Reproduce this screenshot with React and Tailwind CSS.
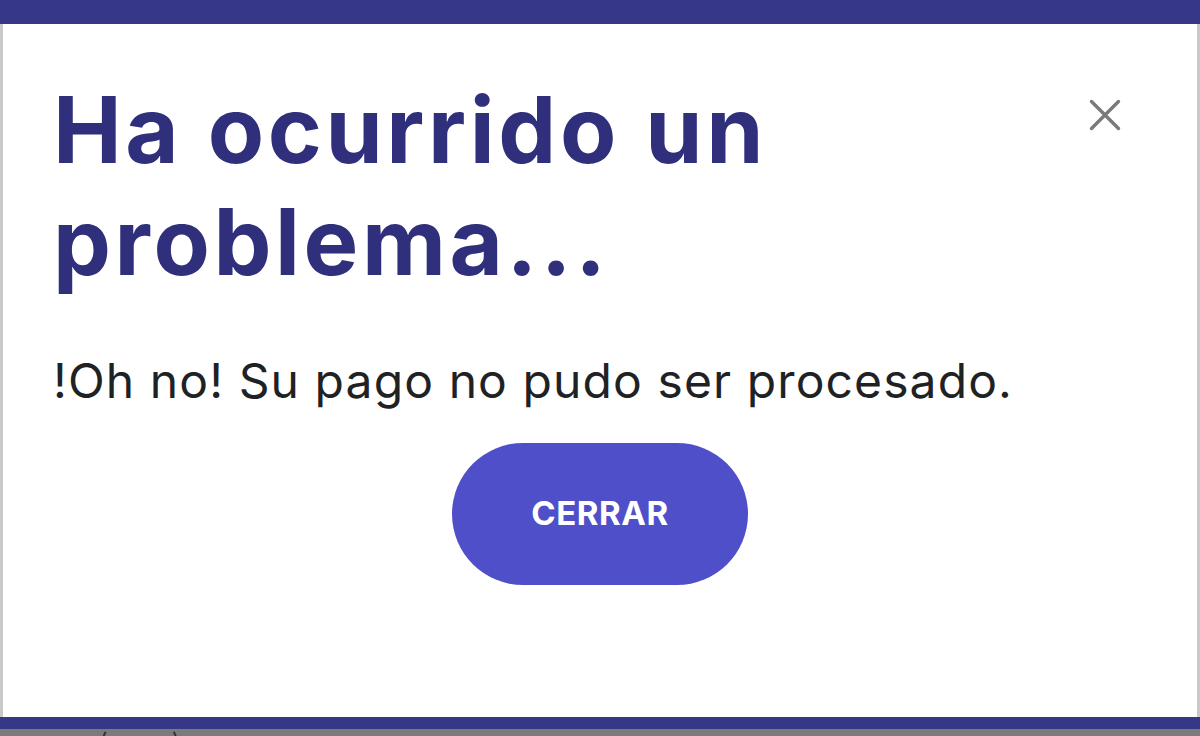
export default function App() {
  return (
    <div className="w-[1200px] h-[736px] flex flex-col bg-white overflow-hidden" style={{ fontFamily: "Inter, 'Noto Sans', sans-serif" }}>
      {/* top accent bar */}
      <div className="h-[24px] shrink-0 bg-[#363787]" />

      {/* modal body */}
      <div className="flex-1 flex flex-col border-l-[3px] border-r-[3px] border-[#c9c9c9] bg-white">
        <div className="flex items-start justify-between pl-[50px] pr-[76px] pt-[50px]">
          <h1 className="text-[92px] leading-[112px] font-bold text-[#2f2f7c] tracking-[3.6px]">
            Ha ocurrido un
            <br />
            problema...
          </h1>
          <button className="mt-[25px] w-[32px] h-[32px] flex items-center justify-center text-[#7a7a7a]">
            <svg width="32" height="32" viewBox="0 0 32 32" fill="none">
              <path d="M2.5 2.5L29.5 29.5M29.5 2.5L2.5 29.5" stroke="currentColor" strokeWidth="3.4" strokeLinecap="round" />
            </svg>
          </button>
        </div>

        <p className="pl-[50px] mt-[53px] text-[48px] leading-[60px] text-[#1f2225] font-normal tracking-[1.1px]">
          !Oh no! Su pago no pudo ser procesado.
        </p>

        <div className="flex justify-center mt-[32px]">
          <button className="w-[296px] h-[142px] rounded-full bg-[#4f4fc9] text-white text-[33px] font-bold tracking-[0.6px]">
            CERRAR
          </button>
        </div>
      </div>

      {/* bottom accent bar */}
      <div className="h-[12px] shrink-0 bg-[#363787]" />
      <div className="h-[7px] shrink-0 bg-[#7b7b7b] relative overflow-hidden text-[#2a2a2a] text-[20px] leading-[20px]">
        <span className="absolute left-[100px] top-[1px]">(</span>
        <span className="absolute left-[172px] top-[1px]">)</span>
      </div>
    </div>
  );
}
